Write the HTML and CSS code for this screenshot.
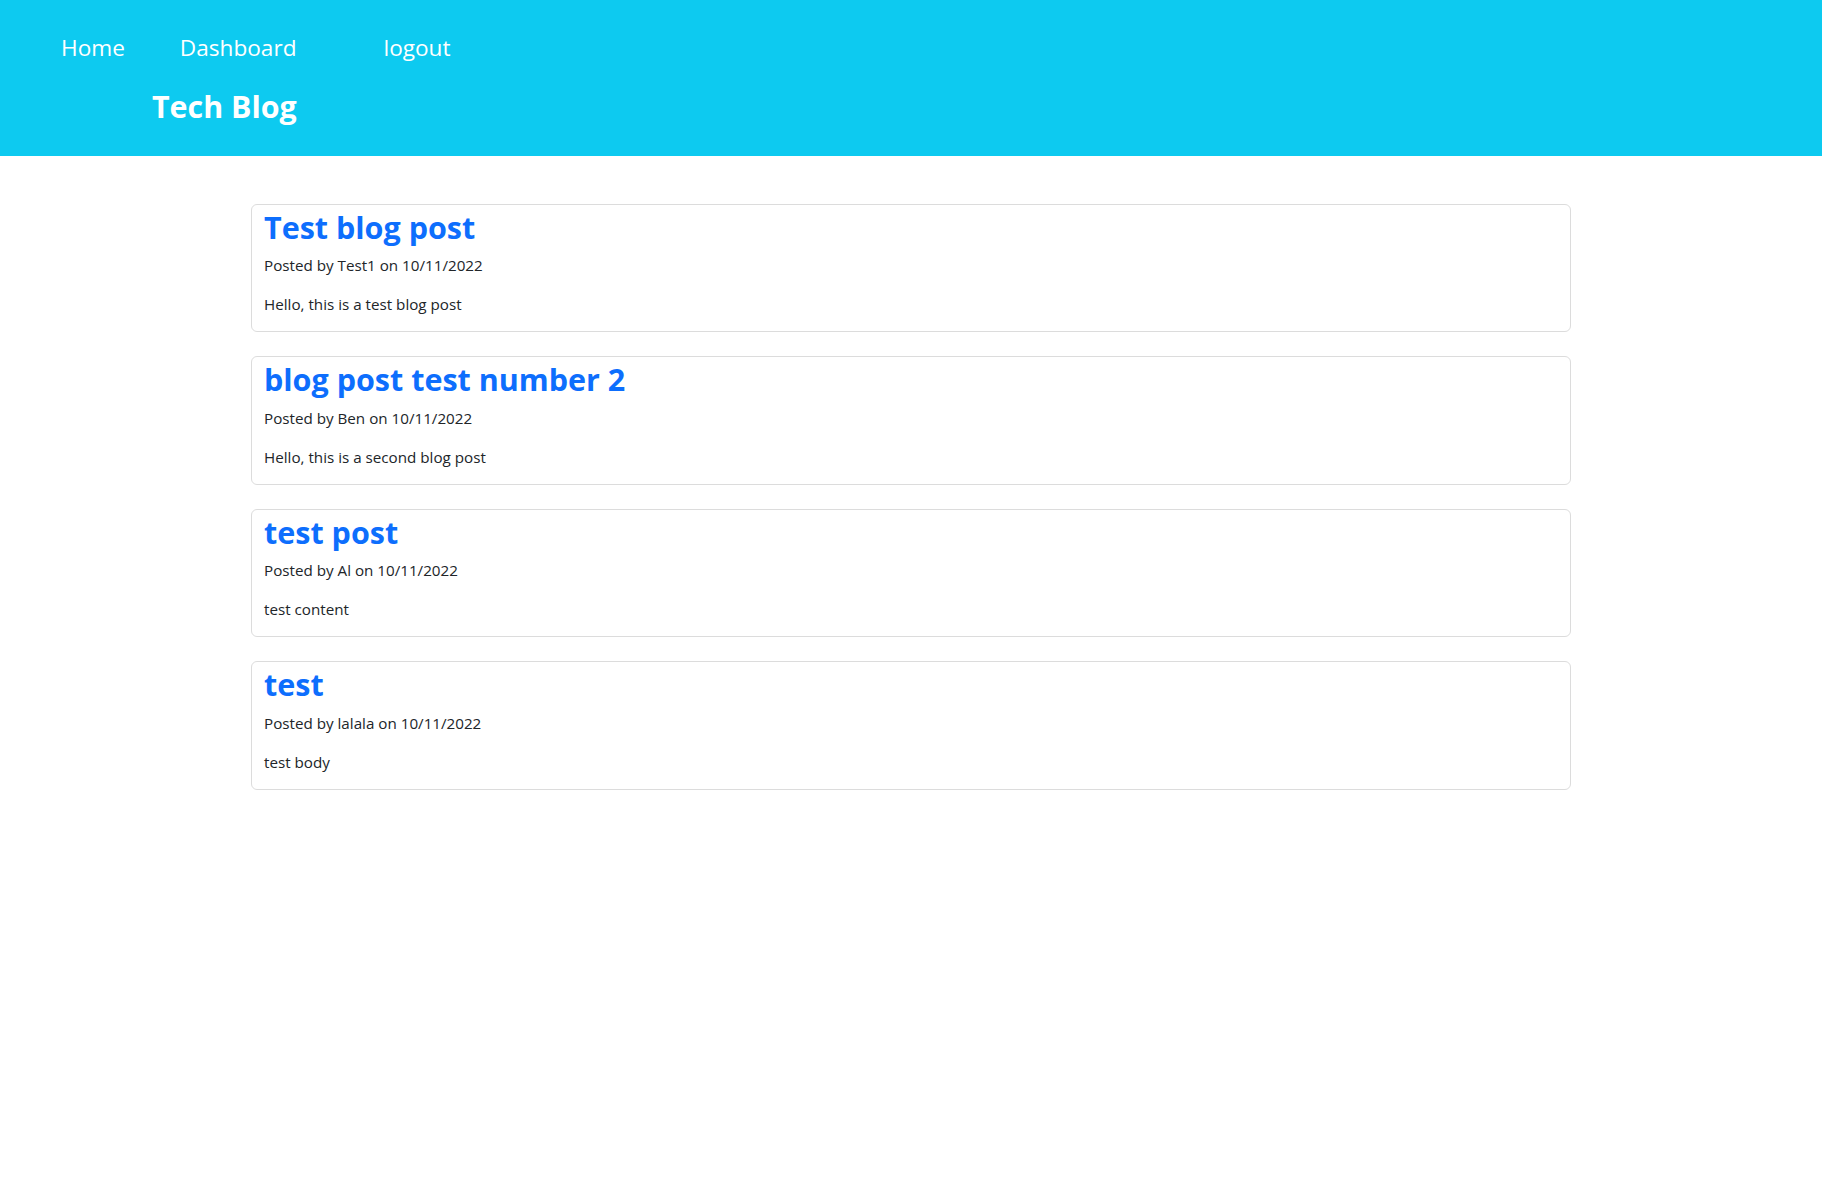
FILE: index.html
```html
<!DOCTYPE html>
<html lang="en">
<head>
<meta charset="utf-8">
<title>Tech Blog</title>
<link rel="stylesheet" href="styles.css">
</head>
<body>
<div class="page">
  <header class="site-header">
    <nav class="nav">
      <a class="nav-link nav-home" href="#">Home</a>
      <a class="nav-link nav-dash" href="#">Dashboard</a>
      <a class="nav-link nav-logout" href="#">logout</a>
    </nav>
    <h1 class="brand">Tech Blog</h1>
  </header>
  <main class="container">
    <article class="post">
      <h2 class="post-title">Test blog post</h2>
      <p class="post-meta">Posted by Test1 on 10/11/2022</p>
      <p class="post-body">Hello, this is a test blog post</p>
    </article>
    <article class="post">
      <h2 class="post-title">blog post test number 2</h2>
      <p class="post-meta">Posted by Ben on 10/11/2022</p>
      <p class="post-body">Hello, this is a second blog post</p>
    </article>
    <article class="post">
      <h2 class="post-title">test post</h2>
      <p class="post-meta">Posted by Al on 10/11/2022</p>
      <p class="post-body">test content</p>
    </article>
    <article class="post">
      <h2 class="post-title">test</h2>
      <p class="post-meta">Posted by lalala on 10/11/2022</p>
      <p class="post-body">test body</p>
    </article>
  </main>
</div>
</body>
</html>
```

FILE: styles.css
```css
* { box-sizing: border-box; }

html, body {
  margin: 0;
  padding: 0;
  background: #fff;
}

body {
  font-family: "Open Sans", "Noto Sans", sans-serif;
  font-size: 15.2px;
  line-height: 24px;
  color: #212529;
}

.page {
  width: calc(100% - 4px);
}

.site-header {
  background: #0dcaf0;
  height: 156px;
  padding-top: 30px;
}

.nav {
  display: flex;
  align-items: baseline;
  padding-left: 61px;
}

.nav-link {
  color: #fff;
  text-decoration: none;
  font-size: 22.6px;
  line-height: 36px;
}

.nav-dash { margin-left: 55px; }
.nav-logout { margin-left: 87px; }

.brand {
  margin: 22px 0 0 152px;
  color: #fff;
  font-size: 30.4px;
  font-weight: 700;
  line-height: 38.4px;
}

.container {
  max-width: 1320px;
  margin: 48px auto 0;
}

.post {
  border: 1px solid #dcdcdc;
  border-radius: 6px;
  padding: 0 12px;
  margin-bottom: 24px;
}

.post-title {
  margin: 0 0 7px;
  padding-top: 3px;
  color: #0d6efd;
  font-size: 30.5px;
  font-weight: 700;
  line-height: 38.4px;
}

.post-meta,
.post-body {
  margin: 0 0 15px;
}
```
